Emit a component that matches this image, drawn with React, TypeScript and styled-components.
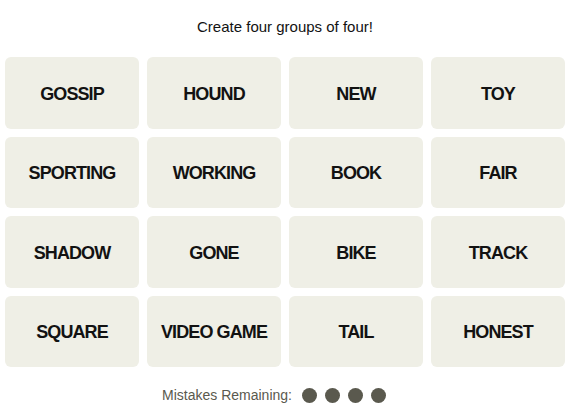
import React from "react";
import styled, { createGlobalStyle } from "styled-components";

const Global = createGlobalStyle`
  html, body { margin: 0; padding: 0; background: #fff; }
  body { font-family: "Liberation Sans", Arial, sans-serif; color: #121212; }
`;

const Page = styled.div`
  width: 570px;
  display: flex;
  flex-direction: column;
  align-items: center;
`;

const Title = styled.h2`
  margin: 17px 0 0;
  height: 20px;
  line-height: 20px;
  font-size: 15px;
  font-weight: 400;
  color: #121212;
`;

const Grid = styled.div`
  margin-top: 20px;
  display: grid;
  grid-template-columns: repeat(4, 134px);
  grid-auto-rows: 71.5px;
  gap: 8px;
`;

const Tile = styled.button`
  border: none;
  border-radius: 6px;
  background: #efefe6;
  color: #121212;
  font-family: "Liberation Sans", Arial, sans-serif;
  font-weight: 700;
  font-size: 18px;
  letter-spacing: -0.9px;
  text-transform: uppercase;
  display: flex;
  align-items: center;
  justify-content: center;
  padding: 3px 0 0;
`;

const Mistakes = styled.div`
  margin-top: 20px;
  display: flex;
  align-items: center;
  gap: 10px;
  font-size: 14px;
  color: #5a594e;
  padding-right: 22px;
`;

const Dots = styled.div`
  display: flex;
  gap: 8px;
`;

const Dot = styled.span`
  width: 15px;
  height: 15px;
  border-radius: 50%;
  background: #5a594e;
`;

const words = [
  "GOSSIP", "HOUND", "NEW", "TOY",
  "SPORTING", "WORKING", "BOOK", "FAIR",
  "SHADOW", "GONE", "BIKE", "TRACK",
  "SQUARE", "VIDEO GAME", "TAIL", "HONEST",
];

export default function App() {
  return (
    <Page>
      <Global />
      <Title>Create four groups of four!</Title>
      <Grid>
        {words.map((w) => (
          <Tile key={w}>{w}</Tile>
        ))}
      </Grid>
      <Mistakes>
        Mistakes Remaining:
        <Dots>
          <Dot />
          <Dot />
          <Dot />
          <Dot />
        </Dots>
      </Mistakes>
    </Page>
  );
}
